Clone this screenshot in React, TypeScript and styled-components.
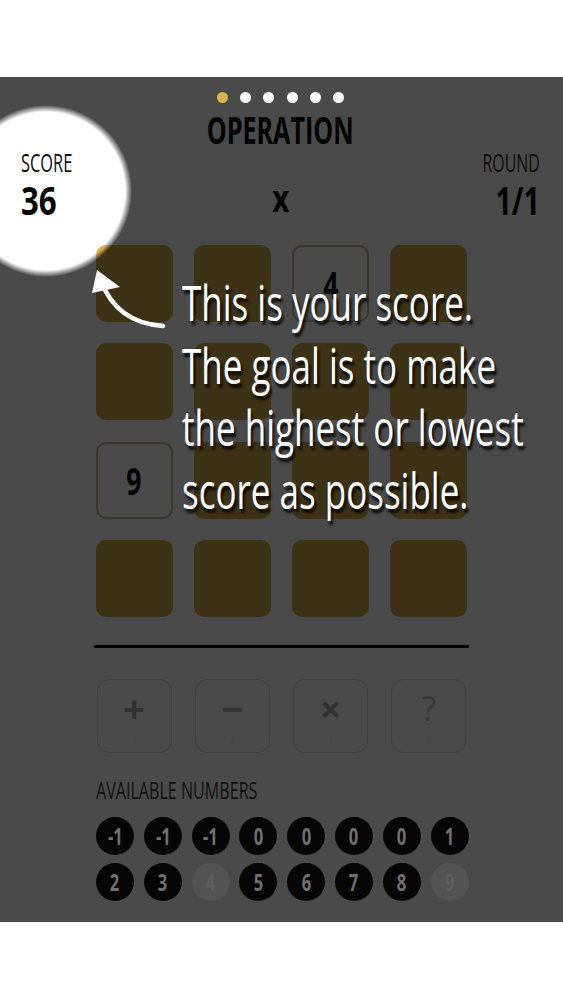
import React from "react";
import styled, { createGlobalStyle } from "styled-components";

const Global = createGlobalStyle`
  html, body { margin: 0; padding: 0; background: #ffffff; }
  body { font-family: "Open Sans", "Liberation Sans", sans-serif; }
  * { box-sizing: border-box; }
`;

const Page = styled.div`
  width: 563px;
  height: 1000px;
  padding-top: 77px;
  background: #ffffff;
`;

const Frame = styled.main`
  position: relative;
  height: 845px;
  background: #4b4a4b;
  overflow: hidden;
  display: flex;
  flex-direction: column;
  align-items: center;
`;

const Sq = styled.span<{ $k: number; $o?: string }>`
  display: inline-block;
  white-space: nowrap;
  transform: scaleX(${(p) => p.$k});
  transform-origin: ${(p) => p.$o ?? "left"} center;
`;

const Spotlight = styled.div`
  position: absolute;
  left: -40px;
  top: 28px;
  width: 172px;
  height: 172px;
  border-radius: 50%;
  background: radial-gradient(circle, #ffffff 79px, rgba(255, 255, 255, 0) 86px);
  z-index: 0;
`;

const Header = styled.header`
  position: relative;
  z-index: 1;
  width: 100%;
  padding: 14.5px 23px 0 21px;
  display: grid;
  grid-template-columns: 1fr auto 1fr;
`;

const Side = styled.div<{ $right?: boolean }>`
  display: flex;
  flex-direction: column;
  align-items: ${(p) => (p.$right ? "flex-end" : "flex-start")};
  padding-top: 57px;
`;

const Label = styled.div`
  font-size: 26px;
  line-height: 26px;
  color: #0d0d0d;
  font-weight: 400;
`;

const BigValue = styled.div`
  margin-top: 5.5px;
  font-size: 39px;
  line-height: 39px;
  font-weight: 700;
  color: #000;
`;

const Center = styled.div`
  display: flex;
  flex-direction: column;
  align-items: center;
`;

const Dots = styled.div`
  display: flex;
  gap: 12.4px;
  height: 11px;
`;

const Dot = styled.span<{ $active?: boolean }>`
  width: 11px;
  height: 11px;
  border-radius: 50%;
  background: ${(p) => (p.$active ? "#d5b44b" : "#ffffff")};
`;

const Title = styled.h1`
  margin: 7px 0 0;
  font-size: 38px;
  line-height: 38px;
  font-weight: 700;
  color: #000;
`;

const OpSign = styled.div`
  margin-top: 31.5px;
  font-size: 37px;
  line-height: 37px;
  font-weight: 700;
  color: #000;
`;

const Board = styled.section`
  position: relative;
  z-index: 1;
  margin-top: 26px;
  display: grid;
  grid-template-columns: repeat(4, 77px);
  grid-auto-rows: 77px;
  column-gap: 21.3px;
  row-gap: 21.3px;
`;

const Tile = styled.div<{ $empty?: boolean; $spot?: boolean }>`
  border-radius: 10px;
  display: flex;
  align-items: center;
  justify-content: center;
  font-size: 38px;
  font-weight: 700;
  color: #000;
  background: ${(p) =>
    p.$empty
      ? "transparent"
      : p.$spot
      ? "radial-gradient(circle at -49px -54px, #d6b047 80px, #3d3215 85px)"
      : "#3d3215"};
  border: ${(p) => (p.$empty ? "2px solid #38362e" : "none")};
`;

const Divider = styled.hr`
  margin: 28.5px 0 0;
  width: 375px;
  height: 3px;
  border: none;
  background: #000;
`;

const Ops = styled.section`
  margin-top: 30.5px;
  display: grid;
  grid-template-columns: repeat(4, 77px);
  column-gap: 21.3px;
`;

const OpButton = styled.div`
  justify-self: center;
  width: 75px;
  height: 74px;
  border: 1.5px solid #414041;
  border-radius: 12px;
  display: flex;
  flex-direction: column;
  align-items: center;
  padding-top: 13px;
`;

const OpSymbol = styled.span<{ $thin?: boolean }>`
  font-size: ${(p) => (p.$thin ? "34px" : "38px")};
  line-height: 30px;
  height: 30px;
  font-weight: ${(p) => (p.$thin ? 400 : 700)};
  color: ${(p) => (p.$thin ? "#393939" : "#323232")};
`;

const OpCount = styled.span`
  margin-top: 10px;
  font-size: 11px;
  line-height: 14px;
  color: #464546;
`;

const Available = styled.section`
  width: 375px;
  margin-top: 26px;
  display: flex;
  flex-direction: column;
  padding-left: 2px;
`;

const AvailLabel = styled.div`
  font-size: 23px;
  line-height: 23px;
  color: #111111;
`;

const Numbers = styled.div`
  margin-top: 15px;
  display: grid;
  grid-template-columns: repeat(8, 38px);
  grid-auto-rows: 38px;
  column-gap: 9.8px;
  row-gap: 8px;
`;

const NumChip = styled.div<{ $used?: boolean }>`
  border-radius: 50%;
  background: ${(p) => (p.$used ? "#545354" : "#050505")};
  color: ${(p) => (p.$used ? "#5f5e5f" : "#707070")};
  display: flex;
  align-items: center;
  justify-content: center;
  font-size: 23px;
  font-weight: 700;
`;

const Tutorial = styled.p`
  position: absolute;
  z-index: 3;
  left: 182px;
  top: 194px;
  margin: 0;
  font-size: 50px;
  line-height: 62.5px;
  color: #ffffff;
  text-shadow: 3px 4px 3px rgba(0, 0, 0, 0.85);
`;

const Line = styled.span`
  display: block;
`;

const Arrow = styled.svg`
  position: absolute;
  z-index: 3;
  left: 85px;
  top: 183px;
  width: 85px;
  height: 75px;
  overflow: visible;
`;

type TileData = { empty?: boolean; value?: string; spot?: boolean };

const tiles: TileData[] = [
  { spot: true }, {}, { empty: true, value: "4" }, {},
  {}, {}, {}, {},
  { empty: true, value: "9" }, {}, {}, {},
  {}, {}, {}, {},
];

const ops = [
  { s: "+", c: "1" },
  { s: "−", c: "2" },
  { s: "×", c: "1" },
  { s: "?", c: "1", thin: true },
];

const numbers: { v: string; used?: boolean }[] = [
  { v: "-1" }, { v: "-1" }, { v: "-1" }, { v: "0" }, { v: "0" }, { v: "0" }, { v: "0" }, { v: "1" },
  { v: "2" }, { v: "3" }, { v: "4", used: true }, { v: "5" }, { v: "6" }, { v: "7" }, { v: "8" }, { v: "9", used: true },
];

export default function App() {
  return (
    <Page>
      <Global />
      <Frame>
        <Spotlight />
        <Header>
          <Side>
            <Label><Sq $k={0.63}>SCORE</Sq></Label>
            <BigValue><Sq $k={0.8}>36</Sq></BigValue>
          </Side>
          <Center>
            <Dots>
              <Dot $active />
              <Dot />
              <Dot />
              <Dot />
              <Dot />
              <Dot />
            </Dots>
            <Title><Sq $k={0.66} $o="center">OPERATION</Sq></Title>
            <OpSign><Sq $k={0.8} $o="center">x</Sq></OpSign>
          </Center>
          <Side $right>
            <Label><Sq $k={0.61} $o="right">ROUND</Sq></Label>
            <BigValue><Sq $k={0.73} $o="right">1/1</Sq></BigValue>
          </Side>
        </Header>

        <Board>
          {tiles.map((t, i) => (
            <Tile key={i} $empty={t.empty} $spot={t.spot}>
              {t.value && <Sq $k={0.7} $o="center">{t.value}</Sq>}
            </Tile>
          ))}
        </Board>

        <Divider />

        <Ops>
          {ops.map((o, i) => (
            <OpButton key={i}>
              <OpSymbol $thin={o.thin}>{o.s}</OpSymbol>
              <OpCount>{o.c}</OpCount>
            </OpButton>
          ))}
        </Ops>

        <Available>
          <AvailLabel><Sq $k={0.7}>AVAILABLE NUMBERS</Sq></AvailLabel>
          <Numbers>
            {numbers.map((n, i) => (
              <NumChip key={i} $used={n.used}>
                <Sq $k={0.72} $o="center">{n.v}</Sq>
              </NumChip>
            ))}
          </Numbers>
        </Available>

        <Arrow viewBox="85 260 85 75">
          <path d="M 163 326 Q 117 323 101 281" fill="none" stroke="#ffffff" strokeWidth="4.5" strokeLinecap="round" />
          <path d="M 97 270 L 92 293 L 120 287 Z" fill="#ffffff" />
        </Arrow>

        <Tutorial>
          <Line><Sq $k={0.7}>This is your score.</Sq></Line>
          <Line><Sq $k={0.7}>The goal is to make</Sq></Line>
          <Line><Sq $k={0.7}>the highest or lowest</Sq></Line>
          <Line><Sq $k={0.7}>score as possible.</Sq></Line>
        </Tutorial>
      </Frame>
    </Page>
  );
}
